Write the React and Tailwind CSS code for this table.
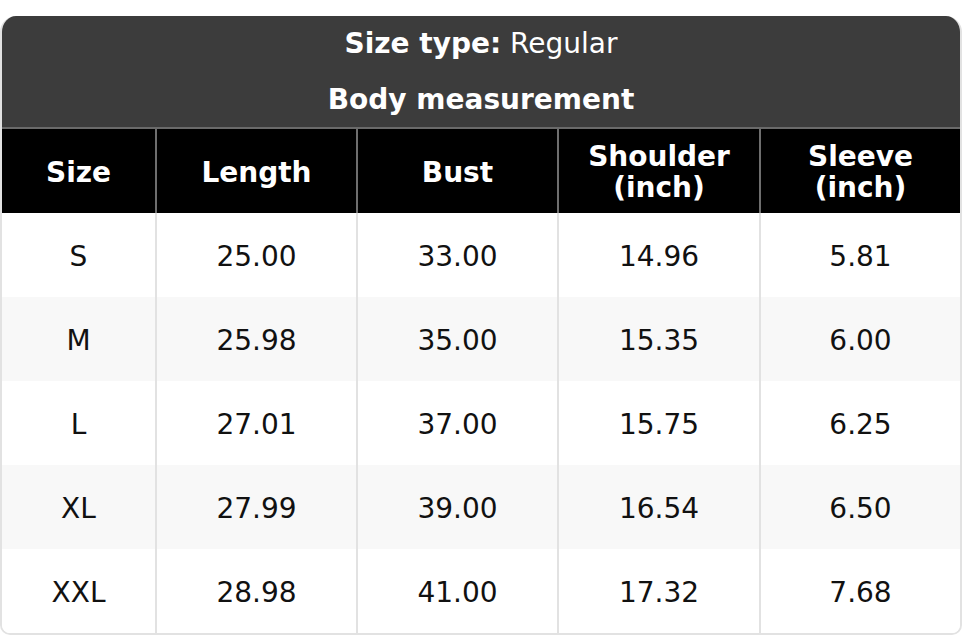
import React from 'react'

const rows = [
  ['S', '25.00', '33.00', '14.96', '5.81'],
  ['M', '25.98', '35.00', '15.35', '6.00'],
  ['L', '27.01', '37.00', '15.75', '6.25'],
  ['XL', '27.99', '39.00', '16.54', '6.50'],
  ['XXL', '28.98', '41.00', '17.32', '7.68'],
]

const heads = [['Size'], ['Length'], ['Bust'], ['Shoulder', '(inch)'], ['Sleeve', '(inch)']]

const cols = 'grid grid-cols-[153px_201px_201px_202px_1fr]'

export default function App() {
  return (
    <div className="w-[962px] h-[636px] bg-white pt-4 font-['DejaVu_Sans',sans-serif] text-[28px]">
      <div className="rounded-t-[16px] rounded-b-[10px] overflow-hidden border-x-2 border-b-2 border-[#e2e2e2]">
        {/* title block */}
        <div className="bg-[#3c3c3c] text-white border-b-2 border-[#6a6a6a]">
          <div className="h-[56px] flex items-center justify-center">
            <span className="font-bold">Size type:</span>&nbsp;<span>Regular</span>
          </div>
          <div className="h-[55px] flex items-center justify-center font-bold">
            Body measurement
          </div>
        </div>

        {/* column heads */}
        <div className={`${cols} bg-black text-white font-bold h-[84px]`}>
          {heads.map((h, i) => (
            <div
              key={i}
              className={`flex flex-col items-center justify-center leading-[31px] pt-[2px] ${i > 0 ? 'border-l-2 border-[#6e6e6e]' : ''}`}
            >
              {h.map((t) => (
                <span key={t}>{t}</span>
              ))}
            </div>
          ))}
        </div>

        {/* body rows */}
        {rows.map((r, ri) => (
          <div key={r[0]} className={`${cols} h-[84px] text-[#111] ${ri % 2 ? 'bg-[#f8f8f8]' : 'bg-white'}`}>
            {r.map((c, i) => (
              <div
                key={i}
                className={`flex items-center justify-center pt-[3px] ${i > 0 ? 'border-l-2 border-[#e2e2e2]' : ''}`}
              >
                {c}
              </div>
            ))}
          </div>
        ))}
      </div>
    </div>
  )
}
